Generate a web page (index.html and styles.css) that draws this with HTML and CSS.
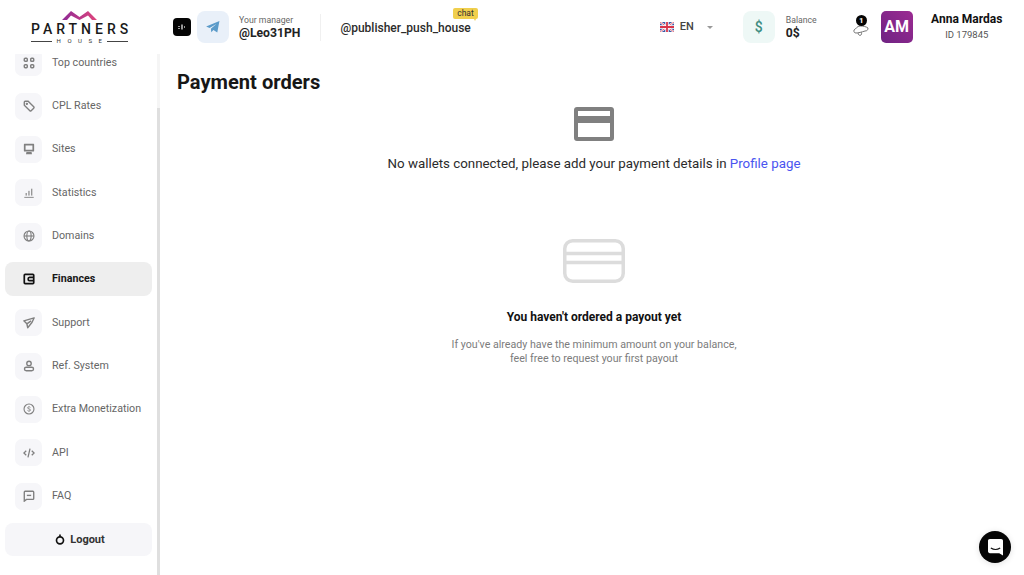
FILE: index.html
```html
<!doctype html>
<html><head>
	<title>Payment orders</title>
	<meta http-equiv="Content-Type" content="text/html; charset=utf-8">
	<link rel="stylesheet" href="styles.css">
</head><body>
<header class="topbar">
	<div class="logo">
		<svg class="logo-roof" width="35" height="10" viewBox="0 0 35 10">
			<defs><linearGradient id="roof" x1="0" x2="1" y1="0" y2="0"><stop offset="0" stop-color="#8e2a96"/><stop offset="1" stop-color="#e0457c"/></linearGradient></defs>
			<path d="M0 10 L9 1 L17.500 7 L26 1 L35 10 L30 10 L26 5.500 L17.500 10 L9 5.500 L5 10 Z" fill="url(#roof)"/>
		</svg>
		<div class="logo-name">PARTNERS</div>
		<div class="logo-sub"><i></i><span>HOUSE</span><i></i></div>
	</div>
	<div class="bar-main">
		<div class="tiny-app">
			<svg width="8" height="8" viewBox="0 0 8 8"><path d="M0 3h2v1H0zM0 5h2v1H0zM3 1.500h2v5H3zM6 3h1v2H6z" fill="#999"/></svg>
		</div>
		<div class="tile tile-blue">
			<svg width="14" height="12" viewBox="0 0 16 14"><path d="M0 6.500 L15.500 0 L13 13.500 L8.500 10.500 L6 13 L5.500 9 L12 3.500 L4 8.200 Z" fill="#5b9bc9"/></svg>
		</div>
		<div class="info manager">
			<span class="info-label">Your manager</span>
			<b class="info-value">@Leo31PH</b>
		</div>
		<div class="bar-sep"></div>
		<div class="chat-link">
			<span class="chat-handle">@publisher_push_house</span>
			<span class="chat-badge">chat</span>
		</div>
		<div class="lang">
			<svg width="14" height="10" viewBox="0 0 14 10">
				<rect width="14" height="10" fill="#3c5aa6"/>
				<path d="M0 0L14 10M14 0L0 10" stroke="#fff" stroke-width="2"/>
				<path d="M0 0L14 10M14 0L0 10" stroke="#d8344a" stroke-width=".7"/>
				<path d="M7 0V10M0 5H14" stroke="#fff" stroke-width="3.400"/>
				<path d="M7 0V10M0 5H14" stroke="#d8344a" stroke-width="1.800"/>
			</svg>
			<span class="lang-code">EN</span>
			<span class="lang-arrow"></span>
		</div>
		<div class="tile tile-green">$</div>
		<div class="info balance">
			<span class="info-label">Balance</span>
			<b class="info-value">0$</b>
		</div>
		<div class="bell">
			<svg width="16" height="12" viewBox="0 0 16 12" fill="none" stroke="#777" stroke-width="1">
				<path d="M1 6C3 5 4 2 7 2C10 2 13 2.500 15 4C15 6 14 7 12 7C9 8 5 9 3 9C1.500 9 .5 8 1 6Z"/>
				<path d="M5 9C5 11 7 12 8 11C9 10 8.500 8.500 8 8"/>
			</svg>
			<span class="bell-count">1</span>
		</div>
		<div class="avatar">AM</div>
		<div class="user">
			<b class="user-name">Anna Mardas</b>
			<span class="user-id">ID 179845</span>
		</div>
	</div>
</header>

<div class="layout">
	<aside class="sidebar">
		<div class="menu-scroll">
		<nav class="menu">
			<a class="menu-item">
				<span class="menu-icon"><svg viewBox="0 0 14 14" fill="none" stroke="#808080" stroke-width="1.700"><rect x="1.500" y="1.500" width="3.500" height="3.500" rx="1"/><rect x="9" y="1.500" width="3.500" height="3.500" rx="1"/><rect x="1.500" y="9" width="3.500" height="3.500" rx="1"/><rect x="9" y="9" width="3.500" height="3.500" rx="1"/></svg></span>
				Top countries
			</a>
			<a class="menu-item">
				<span class="menu-icon"><svg viewBox="0 0 14 14" fill="none" stroke="#808080" stroke-width="1.600"><path d="M1.500 2.500C1.500 2 2 1.500 2.500 1.500H6L12.500 8C13 8.500 13 9 12.500 9.500L9.500 12.500C9 13 8.500 13 8 12.500L1.500 6Z"/><circle cx="4.500" cy="4.500" r=".6" fill="#808080"/></svg></span>
				CPL Rates
			</a>
			<a class="menu-item">
				<span class="menu-icon"><svg viewBox="0 0 14 14"><path d="M2 1H12C12.800 1 13 1.500 13 2V9C13 9.800 12.500 10 12 10H2C1.500 10 1 9.800 1 9V2C1 1.500 1.200 1 2 1ZM3 3V8H11V3Z M4 10.500H10L10.500 13H3.500Z" fill="#808080" fill-rule="evenodd"/></svg></span>
				Sites
			</a>
			<a class="menu-item">
				<span class="menu-icon"><svg viewBox="0 0 14 14" fill="#909090"><rect x="3" y="7" width="1.500" height="3"/><rect x="6.200" y="4.500" width="1.500" height="5.500"/><rect x="9.400" y="2" width="1.500" height="8"/><rect x="1.500" y="11.500" width="11" height="1.200"/></svg></span>
				Statistics
			</a>
			<a class="menu-item">
				<span class="menu-icon"><svg viewBox="0 0 14 14" fill="none" stroke="#808080" stroke-width="1.300"><circle cx="7" cy="7" r="5.800"/><ellipse cx="7" cy="7" rx="2.500" ry="5.800"/><path d="M1.200 7H12.800"/></svg></span>
				Domains
			</a>
			<a class="menu-item is-active">
				<span class="menu-icon"><svg viewBox="0 0 14 14" fill="none" stroke="#111" stroke-width="2"><path d="M2.500 1.500H11.500C12 1.500 12.500 2 12.500 2.500V11.500C12.500 12 12 12.500 11.500 12.500H2.500C2 12.500 1.500 12 1.500 11.500V2.500C1.500 2 2 1.500 2.500 1.500Z"/><path d="M12 5H7.500C6.500 5 6 6 6 7C6 8 6.500 9 7.500 9H12"/></svg></span>
				Finances
			</a>
			<a class="menu-item">
				<span class="menu-icon"><svg viewBox="0 0 14 14" fill="none" stroke="#808080" stroke-width="1.700" stroke-linejoin="round"><path d="M13 1L1 4.500L4.500 8L5.500 12.500C8 10 11.500 6 13 1Z"/><path d="M4.500 8L9.500 4.500"/></svg></span>
				Support
			</a>
			<a class="menu-item">
				<span class="menu-icon"><svg viewBox="0 0 14 14" fill="none" stroke="#808080" stroke-width="1.600"><circle cx="7" cy="4" r="2.600"/><path d="M3.800 8.500H10.200C11.500 8.500 12.300 9.500 12.300 10.600C12.300 11.800 11.500 12.600 10.200 12.600H3.800C2.500 12.600 1.700 11.800 1.700 10.600C1.700 9.500 2.500 8.500 3.800 8.500Z"/></svg></span>
				Ref. System
			</a>
			<a class="menu-item">
				<span class="menu-icon"><svg viewBox="0 0 14 14" fill="none" stroke="#808080"><circle cx="7" cy="7" r="5.800" stroke-width="1.300"/><path d="M8.600 5.200C8.200 4.700 7.600 4.400 7 4.400C6 4.400 5.400 5 5.400 5.700C5.400 7.400 8.700 6.400 8.700 8.200C8.700 9 7.900 9.500 7 9.500C6.300 9.500 5.700 9.200 5.300 8.700" stroke-width="1.100"/></svg></span>
				Extra Monetization
			</a>
			<a class="menu-item">
				<span class="menu-icon"><svg viewBox="0 0 14 14" fill="none" stroke="#808080" stroke-width="1.500"><path d="M3.800 4.300L1 7L3.800 9.700M10.200 4.300L13 7L10.200 9.700M8.200 2L5.800 12"/></svg></span>
				API
			</a>
			<a class="menu-item">
				<span class="menu-icon"><svg viewBox="0 0 14 14" fill="none" stroke="#808080" stroke-width="1.600"><path d="M2.500 1.500H11.500C12 1.500 12.500 2 12.500 2.500V10C12.500 10.500 12 11 11.500 11H4L1.500 13V2.500C1.500 2 2 1.500 2.500 1.500Z"/><path d="M4.500 6.300H9.500"/></svg></span>
				FAQ
			</a>
		</nav>
		</div>
		<button class="logout">
			<svg width="10" height="11" viewBox="0 0 12 13" fill="none" stroke="#111" stroke-width="2"><circle cx="6" cy="7.500" r="4.200"/><path d="M6 .5V3.500"/></svg>
			Logout
		</button>
		<div class="scroll-thumb"></div>
	</aside>

	<main class="content">
		<h1 class="page-title">Payment orders</h1>
		<section class="wallets">
			<svg width="40" height="34" viewBox="0 0 40 34"><path d="M3 0H37C38.800 0 40 1.200 40 3V31C40 32.800 38.800 34 37 34H3C1.200 34 0 32.800 0 31V3C0 1.200 1.200 0 3 0ZM4 4V9H36V4ZM4 16V30H36V16Z" fill="#808080" fill-rule="evenodd"/></svg>
			<p class="wallets-text">No wallets connected, please add your payment details in <a class="link">Profile page</a></p>
		</section>
		<section class="empty">
			<svg width="62" height="44" viewBox="0 0 62 44" fill="none" stroke="#dcdcdc" stroke-width="3.500"><rect x="1.750" y="1.750" width="58.500" height="40.500" rx="8"/><path d="M1.750 14.500H60.250M1.750 23.500H60.250"/></svg>
			<h2 class="empty-title">You haven't ordered a payout yet</h2>
			<p class="empty-text">If you've already have the minimum amount on your balance,<br>feel free to request your first payout</p>
		</section>
	</main>
</div>

<button class="chat-launcher">
	<svg width="15" height="17" viewBox="0 0 16 18"><path d="M2 0H14C15.200 0 16 .8 16 2V17.500L12 15H2C.8 15 0 14.200 0 13V2C0 .8 .8 0 2 0Z" fill="#fff"/><path d="M3 9.500C6 11.500 10 11.500 13 9.500" fill="none" stroke="#111" stroke-width="1.200"/></svg>
</button>
</body></html>
```

FILE: styles.css
```css
* {
	box-sizing: border-box;
}

html, body {
	height: 100%;
}

body {
	margin: 0;
	height: 575px;
	overflow: hidden;
	background: white;
	color: #171717;
	font: 14px/18px Roboto, sans-serif;
}

svg {
	display: block;
	flex: none;
}

/* top bar */
.topbar {
	display: flex;
	height: 54px;
}

.logo {
	width: 159px;
	padding: 10px 0 0 31px;
	flex: none;
}

.logo-roof {
	margin-left: 31px;
}

.logo-name {
	margin-top: 1px;
	font: 500 14px/16px Roboto, sans-serif;
	letter-spacing: 4px;
	color: #1a1a1a;
	white-space: nowrap;
}

.logo-sub {
	display: flex;
	align-items: center;
	gap: 5px;
	width: 97px;
	font: 6px/8px Roboto, sans-serif;
	letter-spacing: 6.500px;
	color: #333;
}

.logo-sub span {
	margin-right: -6px;
}

.logo-sub i {
	flex: 1;
	height: 1px;
	background: #444;
}

.bar-main {
	flex: 1;
	display: flex;
	align-items: center;
	padding: 0 0 0 14px;
}

.tiny-app {
	display: flex;
	align-items: center;
	justify-content: center;
	width: 18px;
	height: 18px;
	margin-right: 6px;
	background: #050505;
	border-radius: 4px;
}

.tile {
	display: flex;
	align-items: center;
	justify-content: center;
	width: 32px;
	height: 32px;
	border-radius: 8px;
	flex: none;
}

.tile-blue {
	background: #e9f0f9;
}

.tile-green {
	margin-left: 30px;
	background: #eef8f6;
	color: #3d8c80;
	font-size: 14px;
	font-weight: 500;
}

.info {
	display: flex;
	flex-direction: column;
}

.info-label {
	font-size: 8.700px;
	line-height: 12px;
	color: #666;
}

.info-value {
	font-size: 12.200px;
	line-height: 15px;
	font-weight: 700;
	color: #222;
}

.manager {
	margin-left: 10px;
}

.bar-sep {
	width: 1px;
	height: 27px;
	margin-left: 20px;
	background: #f0f0f0;
}

.chat-link {
	position: relative;
	margin-left: 19px;
}

.chat-handle {
	font-size: 12px;
	font-weight: 500;
	color: #2b2b2b;
}

.chat-badge {
	position: absolute;
	top: -10px;
	right: -7px;
	height: 11px;
	padding: 0 4px;
	background: #f0cf4d;
	border-radius: 2px;
	font-size: 8.500px;
	line-height: 11px;
	color: #333;
}

.chat-badge:after {
	content: "";
	position: absolute;
	right: 2px;
	bottom: -2px;
	border: 1px solid transparent;
	border-top: 2px solid #f0cf4d;
	border-bottom: 0;
}

.lang {
	display: flex;
	align-items: center;
	margin-left: 189px;
}

.lang-code {
	margin-left: 6px;
	font-size: 11px;
	font-weight: 500;
	color: #444;
}

.lang-arrow {
	width: 0;
	height: 0;
	margin-left: 13px;
	border: 3px solid transparent;
	border-top: 3px solid #999;
	border-bottom: 0;
}

.balance {
	margin-left: 11px;
}

.bell {
	position: relative;
	margin-left: 36px;
	margin-top: 6px;
}

.bell-count {
	position: absolute;
	top: -9px;
	right: 2px;
	width: 11px;
	height: 11px;
	background: #050505;
	border-radius: 50%;
	color: white;
	font-size: 8px;
	line-height: 11px;
	font-weight: 700;
	text-align: center;
}

.avatar {
	display: flex;
	align-items: center;
	justify-content: center;
	width: 32px;
	height: 32px;
	margin-left: 12px;
	background: linear-gradient(45deg, #6f2383, #9b2b92);
	border-radius: 5px;
	color: white;
	font-size: 16px;
	font-weight: 700;
}

.user {
	display: flex;
	flex-direction: column;
	align-items: center;
	width: 72px;
	margin-left: 18px;
}

.user-name {
	font-size: 12px;
	line-height: 15px;
	font-weight: 700;
	color: #111;
	white-space: nowrap;
}

.user-id {
	font-size: 9.500px;
	line-height: 15px;
	color: #555;
}

/* sidebar */
.layout {
	display: flex;
	height: 521px;
}

.sidebar {
	position: relative;
	width: 160px;
	flex: none;
	padding: 0 5px;
	border-right: 3px solid #f5f5f5;
}

.scroll-thumb {
	position: absolute;
	top: 54px;
	bottom: 0;
	right: -3px;
	width: 3px;
	background: #dfdfdf;
}

.menu-scroll {
	overflow: hidden;
}

.menu {
	display: flex;
	flex-direction: column;
	gap: 9.350px;
	margin-top: -8.300px;
}

.menu-item {
	display: flex;
	align-items: center;
	gap: 10px;
	height: 34px;
	padding-left: 10px;
	border-radius: 8px;
	font-size: 10.700px;
	color: #666;
}

.menu-item.is-active {
	background: #eeeeee;
	color: #171717;
	font-weight: 700;
}

.menu-icon {
	display: flex;
	align-items: center;
	justify-content: center;
	width: 27px;
	height: 27px;
	background: #f6f6f9;
	border-radius: 7px;
}

.menu-icon svg {
	width: 12px;
	height: 12px;
}

.is-active .menu-icon {
	background: none;
}

.logout {
	display: flex;
	align-items: center;
	justify-content: center;
	gap: 5px;
	width: 147px;
	height: 33px;
	margin-top: 10.300px;
	padding: 0 0 0 3px;
	border: 0;
	border-radius: 8px;
	background: #f6f6f9;
	color: #333;
	font: 700 11px/14px Roboto, sans-serif;
}

/* main part */
.content {
	flex: 1;
	padding: 0 17px;
}

.page-title {
	margin: 16px 0 0;
	font-size: 20.100px;
	line-height: 24px;
	font-weight: 700;
	color: #171717;
}

.wallets {
	display: flex;
	flex-direction: column;
	align-items: center;
	margin-top: 13px;
	padding-left: 4px;
}

.wallets-text {
	margin: 14px 0 0;
	font-size: 13.330px;
	line-height: 18px;
	color: #2b2b2b;
}

.link {
	color: #4a55f0;
}

.empty {
	display: flex;
	flex-direction: column;
	align-items: center;
	margin-top: 66px;
	padding-left: 4px;
}

.empty-title {
	margin: 26px 0 0;
	font-size: 12px;
	line-height: 16px;
	font-weight: 700;
	color: #111;
}

.empty-text {
	margin: 13px 0 0;
	font-size: 10.670px;
	line-height: 14px;
	color: #7c7c7c;
	text-align: center;
}

.chat-launcher {
	position: fixed;
	right: 13px;
	bottom: 12px;
	display: flex;
	align-items: center;
	justify-content: center;
	width: 32px;
	height: 32px;
	padding: 0;
	border: 0;
	border-radius: 50%;
	background: #050505;
	box-shadow: 0 1px 6px rgba(0, 0, 0, .12);
}
```
